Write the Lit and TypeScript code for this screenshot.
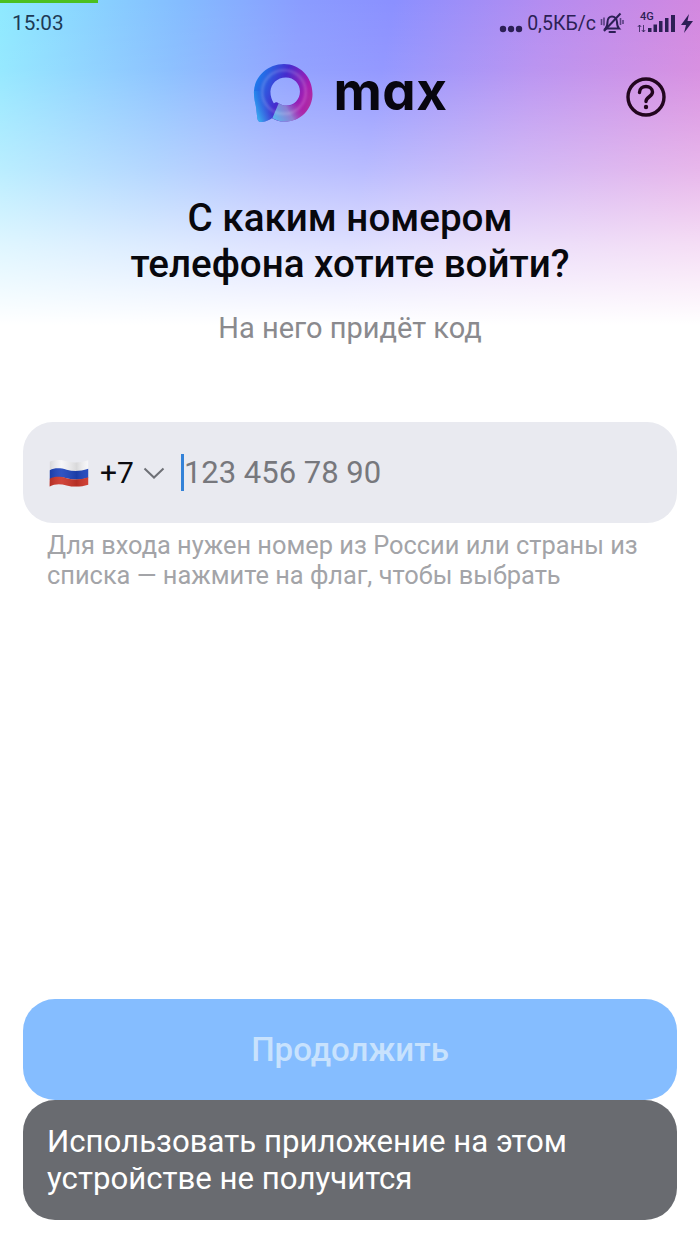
import { LitElement, html, css, svg } from "lit";
import { customElement } from "lit/decorators.js";

@customElement("app-root")
export class AppRoot extends LitElement {
  static styles = css`
    :host {
      display: flex;
      flex-direction: column;
      width: 700px;
      height: 1244px;
      overflow: hidden;
      font-family: Roboto, "Liberation Sans", sans-serif;
      background:
        linear-gradient(to bottom, rgba(255,255,255,0) 0, rgba(255,255,255,.08) 70px, rgba(255,255,255,.4) 170px, rgba(255,255,255,.72) 245px, #fff 325px) no-repeat,
        linear-gradient(100deg, #8eeaff 0%, #84bcff 24%, #8a9cff 40%, #8b90ff 52%, #b58cf0 72%, #de86da 100%) no-repeat;
      background-size: 100% 330px;
      background-color: #fff;
    }
    .progress { width: 98px; height: 3px; background: #4cc01f; flex: none; }
    .status {
      display: flex; align-items: center; justify-content: space-between;
      height: 40px; padding: 0 6px 0 12px; flex: none;
    }
    .time { font-size: 20.7px; color: #1d3a55; }
    .status-right { display: flex; align-items: center; color: #2c1f55; }
    .dots { margin-top: 12px; }
    .speed { font-size: 19.5px; margin-left: 4px; }
    .bell { margin-left: 4px; }
    .net { margin-left: 13px; }
    .bolt { margin-left: 5px; }
    .header {
      display: grid; grid-template-columns: 1fr auto 1fr; align-items: center;
      padding: 19px 34px 0; height: 81px; box-sizing: border-box; flex: none;
    }
    .logo { display: flex; align-items: center; gap: 20px; grid-column: 2; margin-left: 1px; }
    .mark { filter: blur(.5px); }
    .word {
      font-family: Inter, sans-serif; font-weight: 700; font-size: 53px; line-height: 60px;
      color: #08060f; font-feature-settings: "cv11" 1; letter-spacing: .5px; margin-top: -5px;
    }
    .help { justify-self: end; display: block; margin-top: 8px; }
    h1 {
      margin: 0; padding-top: 71px; text-align: center;
      font-size: 38.6px; font-weight: 500; line-height: 46px; color: #08080d;
    }
    .sub { margin: 24px 0 0; text-align: center; font-size: 29px; line-height: 34px; color: #8a8a8e; }
    .field {
      margin: 77px 23px 0; height: 101px; border-radius: 30px; background: #e9eaf0;
      display: flex; align-items: center; padding-left: 25px; flex: none;
    }
    .code { font-size: 30px; color: #0b0b0f; margin-left: 10px; }
    .chev { margin-left: 9px; }
    .caret { width: 3px; height: 37px; background: #3382d8; margin-left: 16px; }
    .ph { font-size: 31px; color: #77787d; }
    .hint { margin: 7px 47px 0; font-size: 25.4px; line-height: 30px; color: #a3a4a8; }
    .spacer { flex: 1; }
    .btn {
      margin: 0 23px; height: 101px; border-radius: 32px; background: #85bdff; flex: none;
      display: flex; align-items: center; justify-content: center;
      font-size: 33px; font-weight: 500; color: #c8e2fd;
    }
    .toast {
      margin: 0 23px 24px; height: 120px; box-sizing: border-box; border-radius: 32px; background: #696b70;
      color: #fff; font-size: 31.2px; line-height: 37px; padding: 23px 24px; flex: none;
    }
  `;

  logo() {
    return svg`<svg class="mark" width="60" height="60" viewBox="0 0 62 62">
      <defs>
        <linearGradient id="r" x1="0" y1="0.3" x2="1" y2="0.65">
          <stop offset="0" stop-color="#1a80ee"/>
          <stop offset=".45" stop-color="#452cce"/>
          <stop offset=".85" stop-color="#a81cb0"/>
          <stop offset="1" stop-color="#b0309e"/>
        </linearGradient>
        <linearGradient id="t" x1="0" y1="1" x2="0.7" y2="0.5">
          <stop offset="0" stop-color="#3fd6f8"/>
          <stop offset="1" stop-color="#2a90ee" stop-opacity="0"/>
        </linearGradient>
        <linearGradient id="b" x1="0.1" y1="0.9" x2="1" y2="0.6">
          <stop offset="0" stop-color="#5fb8ee" stop-opacity=".95"/>
          <stop offset=".5" stop-color="#8f8ed8" stop-opacity=".85"/>
          <stop offset="1" stop-color="#b02aa8" stop-opacity="0"/>
        </linearGradient>
        <filter id="s" x="-10%" y="-10%" width="120%" height="120%"><feGaussianBlur stdDeviation="1.2"/></filter>
      </defs>
      <path fill="url(#r)" fill-rule="evenodd" d="M32 1C16 1 2 13 1 29c-.3 6 1 11 2 16l1.500 12c.3 3 2.500 4.500 5 4 4-.8 7.500-2 10-4 3.500 2 8 3.500 13 3.500 17 0 29-13 29-28.500C61.500 14 48 1 32 1ZM34 15c8.500 0 14.500 6.500 14.500 14.500 0 8-6 14.500-14 14.500-3 0-5.500-.8-8-2.500-1-.7-2.500-1.500-3.500-.8-.6.4-1 .7-1.500.9-2-3-3.500-7-3.500-12.100C18.500 21.500 25 15 34 15Z"/>
      <path fill="url(#t)" d="M1 29c-.3 6 1 11 2 16l1.500 12c.3 3 2.500 4.500 5 4 4-.8 7.500-2 10-4 3-1.500 6-3 7-15.500-1-.7-2.500-1.500-3.500-.8-.6.4-1 .7-1.500.9-2-3-3.500-7-3.500-12.100Z"/>
      <path fill="url(#b)" d="M20 57c3.500 2 8 3.500 13 3.500 10 0 18-5 23-12l-10-8c-3 2.500-7 3.500-11.500 3.500-3 0-5.500-.8-8-2.500Z"/>
      <circle cx="32" cy="30" r="22.500" fill="none" stroke="#fff" stroke-opacity=".16" stroke-width="3" filter="url(#s)"/>
    </svg>`;
  }

  flag() {
    return svg`<svg width="42" height="30" viewBox="0 0 43 32">
      <defs>
        <linearGradient id="sh" x1="0" x2="1" y1="0" y2="0">
          <stop offset="0" stop-color="#000" stop-opacity=".12"/>
          <stop offset=".3" stop-color="#fff" stop-opacity=".08"/>
          <stop offset=".7" stop-color="#000" stop-opacity=".12"/>
          <stop offset="1" stop-color="#fff" stop-opacity=".05"/>
        </linearGradient>
      </defs>
      <path fill="#f6f6f8" d="M1 4c5-2.500 11-2.500 18-.5s14 2 23-1v10.500c-8 2.500-16 2.500-23 .7S6 11.500 1 14Z"/>
      <path fill="#1f45bd" d="M1 13c5-2.500 11-2.500 18-.5s14 2 23-1v9.500c-8 2.500-16 2.500-23 .7S6 20.500 1 23Z"/>
      <path fill="#cd3529" d="M1 22c5-2.500 11-2.500 18-.5s14 2 23-1v8c-8 2.500-16 2.500-23 .7S6 27.500 1 30.500c-.3.200 0-8.500 0-8.500Z"/>
      <path fill="url(#sh)" d="M1 4c5-2.500 11-2.500 18-.5s14 2 23-1v26c-8 2.500-16 2.500-23 .7S6 27.500 1 30.500Z"/>
    </svg>`;
  }

  render() {
    return html`
      <div class="progress"></div>
      <div class="status">
        <span class="time">15:03</span>
        <div class="status-right">
          <svg class="dots" width="24" height="8" viewBox="0 0 24 8"><circle cx="4" cy="4" r="3.200" fill="currentColor"/><circle cx="12" cy="4" r="3.200" fill="currentColor"/><circle cx="20" cy="4" r="3.200" fill="currentColor"/></svg>
          <span class="speed">0,5КБ/с</span>
          <svg class="bell" width="24" height="24" viewBox="0 0 24 24" fill="none" stroke="currentColor" stroke-width="2">
            <path d="M5.500 17.500c1.500-1.500 2-3 2-6.500 0-3.300 2-5.500 4.500-5.500s5 2.200 5 5.500c0 3.500.5 5 2 6.500Z"/>
            <path d="M9.500 21h5.500" stroke-linecap="round"/>
            <path d="M4 20 20.500 2.500"/>
            <path d="M1.500 8v6M4 6.500v8M20.500 7v7M23 9v4" stroke-width="1.600" opacity=".7"/>
          </svg>
          <svg class="net" width="38" height="30" viewBox="0 0 38 30" fill="currentColor">
            <text x="3" y="12" font-family="Roboto, sans-serif" font-size="11" font-weight="500">4G</text>
            <path d="M2.500 24v-7M.8 19l1.700-2 1.700 2M6.500 17v7M4.800 22l1.700 2 1.700-2" fill="none" stroke="currentColor" stroke-width="1" opacity=".8"/>
            <rect x="11" y="20" width="3.500" height="4"/><rect x="16.500" y="16.500" width="3.500" height="7.500"/><rect x="22" y="13" width="3.500" height="11"/><rect x="28" y="10" width="3.500" height="14"/><rect x="34" y="7" width="4" height="17"/>
          </svg>
          <svg class="bolt" width="14" height="24" viewBox="0 0 14 24" fill="currentColor"><path d="M9 3 1 14h5l-2 8 9-12H7.500Z"/></svg>
        </div>
      </div>
      <div class="header">
        <div class="logo">
          ${this.logo()}
          <span class="word">max</span>
        </div>
        <svg class="help" width="40" height="40" viewBox="0 0 40 40" fill="none" stroke="#22061e" stroke-width="3.400">
          <circle cx="20" cy="20" r="18"/>
          <path d="M13.500 15.500c0-3.800 3-6 6.500-6s6.500 2.300 6.500 5.500c0 4.800-6.500 4.700-6.500 9.500" stroke-linecap="round"/>
          <circle cx="20" cy="30" r="2.200" fill="#22061e" stroke="none"/>
        </svg>
      </div>
      <h1>С каким номером<br />телефона хотите войти?</h1>
      <p class="sub">На него придёт код</p>
      <div class="field">
        ${this.flag()}
        <span class="code">+7</span>
        <svg class="chev" width="22" height="12" viewBox="0 0 22 12" fill="none" stroke="#6e7076" stroke-width="2"><path d="M1.500 1.500 11 10.500l9.500-9"/></svg>
        <span class="caret"></span>
        <span class="ph">123 456 78 90</span>
      </div>
      <p class="hint">Для входа нужен номер из России или страны из<br />списка — нажмите на флаг, чтобы выбрать</p>
      <div class="spacer"></div>
      <div class="btn">Продолжить</div>
      <div class="toast">Использовать приложение на этом<br />устройстве не получится</div>
    `;
  }
}
